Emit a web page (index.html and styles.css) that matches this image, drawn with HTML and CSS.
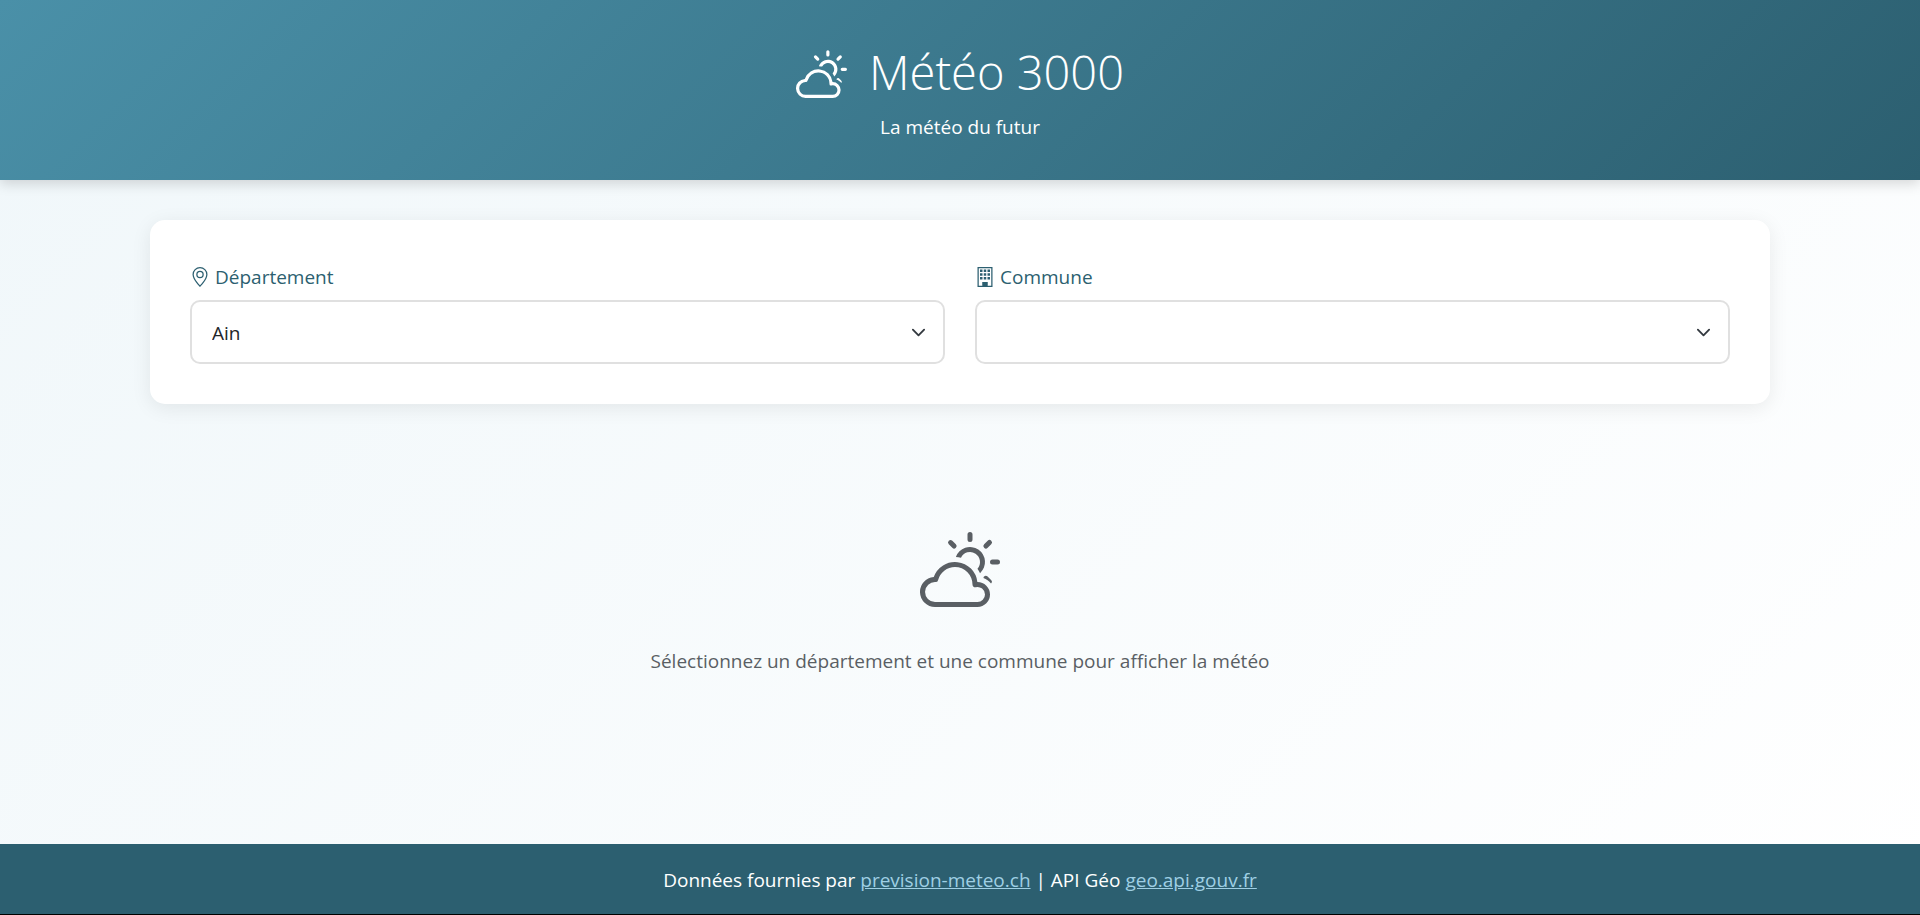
FILE: index.html
```html
<!DOCTYPE html>
<html lang="fr">

<head>
    <meta charset="UTF-8">
    <meta name="viewport" content="width=device-width, initial-scale=1.0">
    <title>Météo 3000</title>
    <link rel="stylesheet" href="styles.css">
</head>

<body>

    <header class="header">
        <h1 class="header-title">
            <svg class="header-icon" viewBox="0 0 16 16" fill="currentColor" aria-hidden="true">
                <path d="M7 8a3.5 3.5 0 0 1 3.5 3.555.5.5 0 0 0 .624.492A1.503 1.503 0 0 1 13 13.5a1.5 1.5 0 0 1-1.5 1.5H3a2 2 0 1 1 .1-3.998.5.5 0 0 0 .51-.375A3.502 3.502 0 0 1 7 8zm4.473 3a4.5 4.5 0 0 0-8.72-.99A3 3 0 0 0 3 16h8.5a2.5 2.5 0 0 0 0-5h-.027z"/>
                <path d="M10.5 1.5a.5.5 0 0 0-1 0v1a.5.5 0 0 0 1 0v-1zm3.743 1.964a.5.5 0 1 0-.707-.707l-.708.707a.5.5 0 0 0 .708.708l.707-.708zm-7.779-.707a.5.5 0 0 0-.707.707l.707.708a.5.5 0 1 0 .708-.708l-.708-.707zm1.734 3.374a2 2 0 1 1 3.296 2.198c.199.281.372.582.516.898a3 3 0 1 0-4.84-3.225c.352.011.696.055 1.028.129zm4.484 4.074c.6.215 1.125.59 1.522 1.072a.5.5 0 0 0-.039-.742l-.707-.707a.5.5 0 0 0-.776.377zM14.5 6.5a.5.5 0 0 0 0 1h1a.5.5 0 0 0 0-1h-1z"/>
            </svg>
            Météo 3000
        </h1>
        <p class="header-subtitle">La météo du futur</p>
    </header>

    <main class="main">
        <form class="search-card">
            <div class="field">
                <label class="field-label" for="departement">
                    <svg class="field-icon" viewBox="0 0 16 16" fill="currentColor" aria-hidden="true">
                        <path d="M12.166 8.94c-.524 1.062-1.234 2.12-1.96 3.07A31.493 31.493 0 0 1 8 14.58a31.481 31.481 0 0 1-2.206-2.57c-.726-.95-1.436-2.008-1.96-3.07C3.304 7.867 3 6.862 3 6a5 5 0 0 1 10 0c0 .862-.305 1.867-.834 2.94zM8 16s6-5.686 6-10A6 6 0 0 0 2 6c0 4.314 6 10 6 10z"/>
                        <path d="M8 8a2 2 0 1 1 0-4 2 2 0 0 1 0 4zm0 1a3 3 0 1 0 0-6 3 3 0 0 0 0 6z"/>
                    </svg>
                    Département
                </label>
                <select class="field-select" id="departement">
                    <option>Ain</option>
                </select>
            </div>

            <div class="field">
                <label class="field-label" for="commune">
                    <svg class="field-icon" viewBox="0 0 16 16" fill="currentColor" aria-hidden="true">
                        <path fill-rule="evenodd" d="M2 0h12v16H2zM3 1v14h3v-3h4v3h3V1z"/>
                        <path d="M4 2h2v2H4zM7 2h2v2H7zM10 2h2v2h-2zM4 5h2v2H4zM7 5h2v2H7zM10 5h2v2h-2zM4 8h2v2H4zM7 8h2v2H7zM10 8h2v2h-2zM6 12h4v3H6z"/>
                    </svg>
                    Commune
                </label>
                <select class="field-select" id="commune"></select>
            </div>
        </form>

        <section class="empty-state">
            <svg class="empty-icon" viewBox="0 0 16 16" fill="currentColor" aria-hidden="true">
                <path d="M7 8a3.5 3.5 0 0 1 3.5 3.555.5.5 0 0 0 .624.492A1.503 1.503 0 0 1 13 13.5a1.5 1.5 0 0 1-1.5 1.5H3a2 2 0 1 1 .1-3.998.5.5 0 0 0 .51-.375A3.502 3.502 0 0 1 7 8zm4.473 3a4.5 4.5 0 0 0-8.72-.99A3 3 0 0 0 3 16h8.5a2.5 2.5 0 0 0 0-5h-.027z"/>
                <path d="M10.5 1.5a.5.5 0 0 0-1 0v1a.5.5 0 0 0 1 0v-1zm3.743 1.964a.5.5 0 1 0-.707-.707l-.708.707a.5.5 0 0 0 .708.708l.707-.708zm-7.779-.707a.5.5 0 0 0-.707.707l.707.708a.5.5 0 1 0 .708-.708l-.708-.707zm1.734 3.374a2 2 0 1 1 3.296 2.198c.199.281.372.582.516.898a3 3 0 1 0-4.84-3.225c.352.011.696.055 1.028.129zm4.484 4.074c.6.215 1.125.59 1.522 1.072a.5.5 0 0 0-.039-.742l-.707-.707a.5.5 0 0 0-.776.377zM14.5 6.5a.5.5 0 0 0 0 1h1a.5.5 0 0 0 0-1h-1z"/>
            </svg>
            <p>Sélectionnez un département et une commune pour afficher la météo</p>
        </section>
    </main>

    <footer class="footer">
        <p>Données fournies par <a href="#">prevision-meteo.ch</a> | API Géo <a href="#">geo.api.gouv.fr</a></p>
    </footer>

</body>

</html>
```
FILE: styles.css
```css
* {
    box-sizing: border-box;
}

body {
    margin: 0;
    min-height: 100vh;
    display: flex;
    flex-direction: column;
    font-family: "Segoe UI", "Open Sans", sans-serif;
    font-size: 19px;
    line-height: 30px;
    color: #212529;
    background: linear-gradient(135deg, #f0f7fa 0%, #ffffff 100%);
}

h1,
p {
    margin: 0;
}

.header {
    display: flex;
    flex-direction: column;
    align-items: center;
    gap: 10px;
    padding: 42px 20px 38px;
    color: white;
    text-align: center;
    background: linear-gradient(135deg, #4a90a8 0%, #2c5f70 100%);
    box-shadow: 0 4px 12px rgb(0 0 0 / 15%);
}

.header-title {
    display: flex;
    align-items: center;
    gap: 22px;
    font-size: 47px;
    font-weight: 300;
    line-height: 60px;
}

.header-icon {
    width: 51px;
    height: 51px;
}

.main {
    flex: 1;
    width: 100%;
    max-width: 1700px;
    margin: 0 auto;
    padding: 40px;
}

.search-card {
    display: grid;
    grid-template-columns: 1fr 1fr;
    gap: 30px;
    padding: 40px;
    background: white;
    border-radius: 15px;
    box-shadow: 0 4px 20px rgb(0 0 0 / 8%);
}

.field-label {
    display: flex;
    align-items: center;
    gap: 5px;
    margin-bottom: 6px;
    line-height: 34px;
    color: #2c5f70;
}

.field-icon {
    width: 20px;
    height: 20px;
}

.field-select {
    display: block;
    width: 100%;
    height: 64px;
    padding: 2px 60px 0 20px;
    font: inherit;
    color: #212529;
    appearance: none;
    border: 2px solid #e0e0e0;
    border-radius: 10px;
    background: white url("data:image/svg+xml,%3csvg xmlns='http://www.w3.org/2000/svg' viewBox='0 0 16 16'%3e%3cpath fill='none' stroke='%23343a40' stroke-linecap='round' stroke-linejoin='round' stroke-width='2' d='m2 5 6 6 6-6'/%3e%3c/svg%3e") no-repeat right 17px center / 15px 15px;
}

.empty-state {
    display: flex;
    flex-direction: column;
    align-items: center;
    gap: 39px;
    padding: 123px 20px 80px;
    color: #5a5f64;
    text-align: center;
}

.empty-icon {
    width: 80px;
    height: 80px;
}

.footer {
    padding: 21px 20px 19px;
    color: white;
    text-align: center;
    background: #2c5f70;
    border-bottom: 1px solid #000;
}

.footer a {
    color: #9fcfe4;
}
```
